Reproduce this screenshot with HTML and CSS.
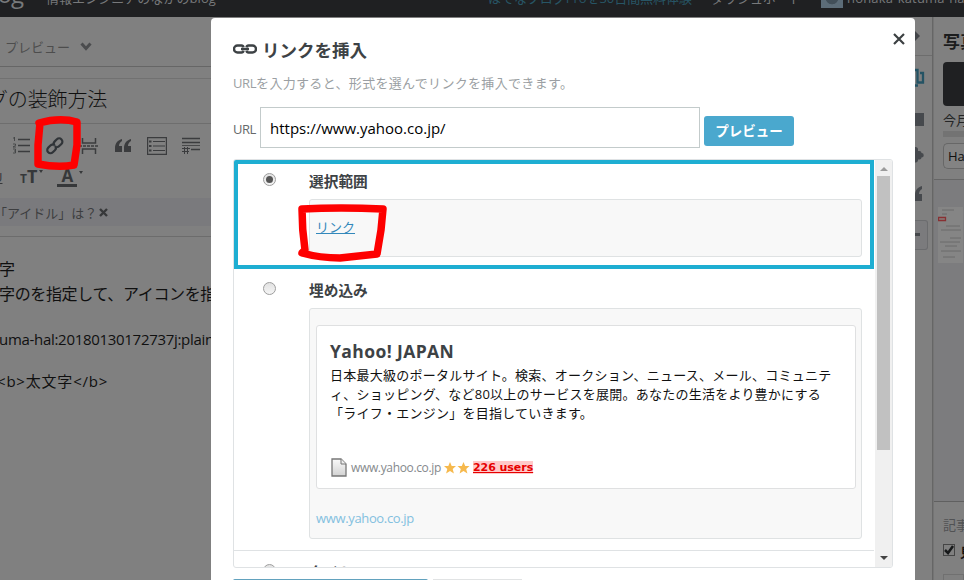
FILE: index.html
```html
<!DOCTYPE html>
<html lang="ja">
<head>
    <meta charset="UTF-8">
    <title>リンクを挿入</title>
    <link rel="stylesheet" href="styles.css">
</head>
<body>

<header class="topbar">
    <span class="logo">Blog</span>
    <span class="blog-name">情報エンジニアのながのblog</span>
    <span class="pro">はてなブログProを30日間無料体験</span>
    <span class="dash">ダッシュボード</span>
    <span class="avatar"></span>
    <span class="user">honaka-katuma-hal</span>
</header>

<div class="app">
    <main class="editor">
        <div class="tabs">プレビュー
            <svg width="12" height="9" viewBox="0 0 12 9"><path d="M1.500 1.500 6 6.500 10.500 1.500" fill="none" stroke="#4b4c4e" stroke-width="3"/></svg>
        </div>
        <div class="entry-title">グの装飾方法</div>
        <div class="toolbar">
            <div class="tools">
                <svg width="18" height="18" viewBox="0 0 18 18"><path d="M5 2.500h12M5 8.500h12M5 14.500h12" stroke="#3b3c3e" stroke-width="1.300"/><path d="M1.500 0v4M0 1h1.500M0 7h2.500v1.500L0 10h3M0 12h2.500v4H0M1 14h1.500" fill="none" stroke="#3b3c3e" stroke-width=".8"/></svg>
                <svg width="18" height="18" viewBox="0 0 18 18"><g fill="none" stroke="#303438" stroke-width="2.200" transform="rotate(-44 9 9)"><path d="M8.500 6.800A3 3 0 0 0 6 5.500H3a3.200 3.200 0 0 0 0 6.500h3a3 3 0 0 0 3-3M9.500 10.800A3 3 0 0 0 12 12h3a3.200 3.200 0 0 0 0-6.500h-3a3 3 0 0 0-3 3"/></g></svg>
                <svg width="20" height="18" viewBox="0 0 20 18"><path d="M3.500 1v5h13V1M3.500 17v-5h13v5" fill="none" stroke="#3b3c3e" stroke-width="1.500"/><path d="M0 9h20" stroke="#3b3c3e" stroke-width="1.500" stroke-dasharray="3 1"/></svg>
                <svg width="17" height="16" viewBox="0 0 17 16"><path d="M7 1C3 2 0 5 0 10v4h7V8H4c0-2 1-4 3-5zM16 1c-4 1-7 4-7 9v4h7V8h-3c0-2 1-4 3-5z" fill="#3b3c3e"/></svg>
                <svg width="20" height="18" viewBox="0 0 20 18"><path d="M.6.600h18.800v16.800H.6zM6 4.500h12M6 9h12M6 13.500h12" fill="none" stroke="#3b3c3e" stroke-width="1.200"/><path d="M2 4.500h2.500M2 9h2.500M2 13.500h2.500" stroke="#3b3c3e" stroke-width="2"/></svg>
                <svg width="18" height="18" viewBox="0 0 18 18"><path d="M0 1.500h18M0 5.500h18M9 12.500h9" stroke="#3b3c3e" stroke-width="1.500"/><path d="M0 8.500h18" stroke="#3b3c3e" stroke-width=".8"/><path d="M0 11.500h8M0 14.500h7M2.500 10v7M5.500 10v7" stroke="#3b3c3e" stroke-width="1"/></svg>
            </div>
            <div class="tools second">
                <span class="under">U</span>
                <span class="size"><small>T</small>T<i></i></span>
                <span class="color"><b>A</b><i></i></span>
            </div>
        </div>
        <div class="topic">「アイドル」は？
            <svg width="9" height="9" viewBox="0 0 9 9"><path d="M1 1l7 7M8 1 1 8" stroke="#37383a" stroke-width="2.400"/></svg>
        </div>
        <div class="body-text">
            <p>字</p>
            <p>字のを指定して、アイコンを指定</p>
            <p class="id">uma-hal:20180130172737j:plain</p>
            <p class="tag">&lt;b&gt;太文字&lt;/b&gt;</p>
        </div>
    </main>

    <nav class="rail">
        <div class="rail-top"><svg width="5" height="10" viewBox="0 0 5 10"><path d="M0 0l5 5-5 5z" fill="#424549"/></svg></div>
        <svg width="10" height="20" viewBox="0 0 10 20"><path d="M0 2h2.500v12.500H8V5H5M0 17.500h3" fill="none" stroke="#245364" stroke-width="2.300"/></svg>
        <svg width="9" height="13" viewBox="0 0 9 13"><path d="M0 0h9v13H0z" fill="#46494d"/></svg>
        <svg width="9" height="18" viewBox="0 0 9 18"><path d="M0 1a2.500 2.500 0 0 1 3 3v1h1.500a2 2 0 0 1 2 2 2.200 2.200 0 1 1 0 4.500 2 2 0 0 1-2 2H3v1a2.500 2.500 0 0 1-3 2z" fill="#46494d"/></svg>
        <svg width="8" height="16" viewBox="0 0 8 16"><path d="M7 0C3 1 0 4 0 9v6h7V8H4c0-2 1-4 3-5z" fill="#46494d"/></svg>
        <div class="rail-more"></div>
    </nav>

    <aside class="side">
        <h2>写真を投稿</h2>
        <div class="upload"></div>
        <div class="month">今月の利用量</div>
        <div class="meter"></div>
        <div class="album">Hatena</div>
        <div class="photos">
            <svg width="25" height="56" viewBox="0 0 25 56"><path d="M0 0h25v56H0z" fill="#858585"/><path d="M4 3h12M4 7h5M8 19h14M3 23h20M12 31h11M2 35h20M7 39h12M3 44h20M5 50h12" stroke="#6a6a6a"/><path d="M.5 10.500h7v3h-7z" fill="#89807f" stroke="#883033" stroke-width="1.300"/></svg>
        </div>
        <div class="settings">
            <h3>記事</h3>
            <div class="check"><span><svg width="12" height="12" viewBox="0 0 12 12"><path d="M2 6l3 3 5-7" fill="none" stroke="#17191a" stroke-width="2.500"/></svg></span>見出し</div>
            <div class="field"></div>
        </div>
    </aside>
</div>

<section class="modal">
    <svg class="close" width="12" height="12" viewBox="0 0 12 12"><path d="M1 1l10 10M11 1 1 11" stroke="#3c4042" stroke-width="2.200"/></svg>
    <h1>
        <svg width="24" height="10" viewBox="0 0 24 10"><path d="M10.500 3.200Q10.200 1.500 8.500 1.500H4.500a3.500 3.500 0 0 0 0 7h4Q10.200 8.500 10.500 6.800M13.500 3.200Q13.800 1.500 15.500 1.500h4a3.500 3.500 0 0 1 0 7h-4Q13.800 8.500 13.500 6.800M8 5h8" fill="none" stroke="#3d4245" stroke-width="2.400"/></svg>
        <span>リンクを挿入</span>
    </h1>
    <p class="lead"><span>URL</span>を入力すると、形式を選んでリンクを挿入できます。</p>

    <div class="url-row">
        <label>URL</label>
        <div class="url-input">https://www.yahoo.co.jp/</div>
        <div class="btn">プレビュー</div>
    </div>

    <div class="list">
        <div class="items">
            <div class="item selected">
                <span class="radio on"></span>
                <div class="content">
                    <h4>選択範囲</h4>
                    <div class="preview"><a>リンク</a></div>
                </div>
            </div>
            <div class="item embed">
                <span class="radio"></span>
                <div class="content">
                    <h4>埋め込み</h4>
                    <div class="preview">
                        <div class="card">
                            <h5>Yahoo! JAPAN</h5>
                            <p>日本最大級のポータルサイト。検索、オークション、ニュース、メール、コミュニテ<br>ィ、ショッピング、など80以上のサービスを展開。あなたの生活をより豊かにする<br>「ライフ・エンジン」を目指していきます。</p>
                            <div class="meta">
                                <svg width="16" height="19" viewBox="0 0 16 19"><defs><linearGradient id="paper" x2="0" y2="1"><stop stop-color="#fafafa"/><stop offset="1" stop-color="#d2d2d2"/></linearGradient></defs><path d="M1 1h9l5 5v12H1z" fill="url(#paper)" stroke="#777" stroke-width="1.300"/><path d="M10 1v5h5" fill="#eee" stroke="#777"/></svg>
                                <span class="host">www.yahoo.co.jp</span>
                                <svg class="stars" width="26" height="12" viewBox="0 0 26 12"><g fill="#f6b94d"><path id="star" d="M6 0l1.700 4H12L8.700 6.900 9.900 11.500 6 8.900l-3.900 2.600 1.200-4.600L0 4h4.300z"/><use href="#star" x="13.500"/></g></svg>
                                <span class="users">226 users</span>
                            </div>
                        </div>
                        <span class="cite">www.yahoo.co.jp</span>
                    </div>
                </div>
            </div>
            <div class="item last">
                <span class="radio"></span>
                <div class="content"><h4>タイトル</h4></div>
            </div>
        </div>
        <div class="scrollbar">
            <i class="up"></i>
            <div class="thumb"></div>
            <i class="down"></i>
        </div>
    </div>
    <div class="footer"><div class="ok"></div><div class="cancel"></div></div>
</section>

<!-- hand-drawn markers -->
<svg class="marks" width="964" height="580" viewBox="0 0 964 580">
    <path d="M39 123Q60 117 77 122L77 145 74 165Q58 168 38 164L38 145 40 123" />
    <path d="M302 209Q340 207 383 209L381 230 377 254 340 258Q320 258 302 253L305 250Q302 230 302 209" />
</svg>

</body>
</html>
```
FILE: styles.css
```css
* { box-sizing: border-box; }
body { margin: 0; position: relative; width: 964px; height: 580px; overflow: hidden; background: #808080; font-family: "Open Sans", "Noto Sans CJK JP", sans-serif; font-size: 13px; color: #101010; }
h1, h2, h3, h4, h5, p { margin: 0; }
svg { display: block; flex: none; }

.topbar { display: flex; height: 17px; background: #1f2022; color: #77797b; white-space: nowrap; overflow: hidden; line-height: 20px; }
.topbar span { flex: none; margin-top: -12px; }
.topbar .logo { width: 68px; margin-left: -22px; font-size: 24px; margin-top: -16px; letter-spacing: -1px; }
.topbar .blog-name { width: 442px; font-size: 13px; letter-spacing: .05px; }
.topbar .pro { width: 223px; color: #275565; letter-spacing: -.05px; }
.topbar .dash { width: 110px; }
.topbar .avatar { width: 22px; height: 20px; margin-right: 4px; background: radial-gradient(circle at 50% 50%, #424f59 40%, #5c6c78 45%); }
.topbar .user { letter-spacing: .2px; }

.app { display: grid; grid-template-columns: 911px 22px 31px; height: 563px; }
.editor { overflow: hidden; white-space: nowrap; }
.tabs { display: flex; align-items: center; gap: 10px; height: 50px; padding: 9px 0 0 5px; border-bottom: 1px solid #666; color: #4d4d4d; }
.entry-title { height: 46px; margin-top: 11px; padding-left: 0; text-indent: -12px; border-top: 1px solid #717171; border-bottom: 1px solid #6e6e6e; font-size: 20px; font-weight: 300; letter-spacing: -.15px; line-height: 42px; }
.toolbar { height: 74px; padding-top: 12px; }
.tools { display: flex; align-items: center; gap: 15px; height: 20px; padding-left: 13px; }
.tools svg:nth-child(n+4) { margin-left: 1px; margin-right: -1px; }
.tools.second { gap: 14px; height: 22px; margin-top: 10px; padding-left: 0; color: #36383a; }
.under { width: 6px; text-indent: -7px; overflow: hidden; text-decoration: underline; }
.size { display: flex; align-items: baseline; font-size: 18px; font-weight: bold; line-height: 20px; }
.size small { font-size: 12px; }
.color { display: flex; }
.color b { width: 20px; height: 20px; border-bottom: 3px solid #36383a; text-align: center; font-size: 17px; line-height: 18px; }
.second i { align-self: flex-start; margin: 4px 0 0 2px; border: 2px solid transparent; border-top: 3px solid #36383a; border-bottom: 0; }
.topic { display: flex; align-items: center; gap: 2px; height: 28px; background: #7a7a7d; color: #3d3e40; text-indent: -6px; }
.body-text { margin-top: 10px; padding-top: 20px; border-top: 1px solid #6c6c6c; font-size: 16px; line-height: 25px; letter-spacing: -.35px; text-indent: -1px; }
.body-text .id { margin-top: 20px; font-size: 15px; letter-spacing: -.3px; }
.body-text .tag { margin-top: 17px; text-indent: -3px; font-size: 15px; letter-spacing: .8px; }

.rail { display: flex; flex-direction: column; padding-left: 4px; border-right: 1px solid #666; }
.rail-top { height: 39px; margin-bottom: 12px; padding-top: 14px; border-bottom: 1px solid #6d6d6d; }
.rail > svg:nth-of-type(1) { margin-bottom: 25px; }
.rail > svg:nth-of-type(2) { margin-bottom: 20px; }
.rail > svg:nth-of-type(3) { margin-bottom: 22px; }
.rail > svg:nth-of-type(4) { margin-bottom: 18px; }
.rail-more { width: 13px; height: 30px; border: 1px solid #6b6c6e; border-left: 0; border-radius: 0 3px 3px 0; background: #7b7b7d; }
.rail-more::before { content: ""; display: block; width: 5px; height: 3px; margin-top: 12px; background: #45484b; }

.side { border-left: 1px solid #747474; overflow: hidden; white-space: nowrap; }
.side h2 { padding-left: 9px; margin-top: 13px; font-size: 17px; line-height: 24px; color: #1b1c1d; }
.upload { height: 44px; margin: 8px 0 0 9px; border-radius: 4px 0 0 4px; background: #1f2022; }
.month { padding-left: 9px; margin-top: 4px; line-height: 20px; color: #242526; }
.meter { height: 6px; margin: 1px 0 0 9px; background: #737373; }
.album { height: 26px; margin: 6px 0 0 9px; padding-left: 4px; border: 1px solid #676767; border-right: 0; border-radius: 5px 0 0 5px; background: #838383; line-height: 25px; }
.photos { height: 323px; margin-top: 10px; padding: 27px 0 0 4px; border-top: 1px solid #666; border-bottom: 1px solid #606060; background: #7c7c7e; }
.settings { padding-left: 9px; }
.settings h3 { padding-top: 12px; font-size: 13px; font-weight: normal; line-height: 22px; color: #515254; }
.check { display: flex; align-items: center; gap: 5px; height: 24px; margin-top: 3px; font-weight: bold; }
.check span { width: 12px; height: 12px; margin-top: -2px; outline: 1px solid #454545; outline-offset: -1px; }
.field { height: 20px; margin-top: 11px; border: 1px solid #707070; }

.modal { position: absolute; left: 211px; top: 18px; width: 704px; height: 570px; padding: 19px 22px 0; border-radius: 4px 4px 0 0; background: #fff; color: #3d4245; }
.close { position: absolute; right: 10px; top: 15px; }
.modal h1 { display: flex; align-items: center; gap: 5px; height: 24px; font-size: 17.500px; line-height: 24px; font-weight: bold; }
.modal h1 span { margin-top: 2px; }
.lead { margin-top: 12px; line-height: 20px; color: #9b9fa3; letter-spacing: .32px; }
.lead span { letter-spacing: -.4px; }
.url-row { display: flex; align-items: center; height: 41px; margin-top: 14px; }
.url-row label { width: 27px; margin-top: 2px; color: #66696b; letter-spacing: -.5px; }
.url-input { width: 440px; height: 41px; padding-left: 9px; border: 1px solid #c3cbcb; color: #000; font-size: 15px; line-height: 40px; letter-spacing: 0; }
.btn { width: 90px; height: 30px; margin: 7px 0 0 4px; border-radius: 3px; background: #4aa8ce; color: #fff; text-align: center; font-size: 13.500px; font-weight: bold; line-height: 30px; }

.list { display: flex; width: 660px; height: 409px; margin-top: 11px; border: 1px solid #dfe2e4; border-radius: 3px; overflow: hidden; }
.items { width: 640px; margin-right: 1px; overflow: hidden; }
.item { display: flex; padding: 0 12px 0 29px; }
.item h4 { height: 22px; font-size: 14.700px; line-height: 22px; }
.radio { flex: none; width: 13px; height: 13px; border: 1px solid #9d9d9d; border-radius: 50%; background: linear-gradient(#e2e2e2, #f5f5f5); }
.radio.on { display: grid; place-items: center; }
.radio.on::before { content: ""; width: 7px; height: 7px; border-radius: 50%; background: #555; }
.content { width: 553px; margin-left: 33px; }
.preview { border: 1px solid #dfe2e3; border-radius: 3px; background: #f8f8f8; }
.item.selected { height: 109px; padding: 6px 7px 0 25px; border: 4px solid #1eaed2; }
.selected .radio { margin-top: 3px; }
.selected .preview { height: 58px; margin-top: 7px; padding: 17px 6px 0; line-height: 20px; }
.selected a { color: #3388bb; text-decoration: underline; }
.embed { height: 281px; padding-top: 10px; }
.embed .radio { margin-top: 3px; }
.embed .preview { height: 231px; margin-top: 7px; padding: 16px 5px 0 6px; }
.card { height: 164px; padding: 13px 13px 0; border: 1px solid #dfe0e1; border-radius: 3px; background: #fff; color: #111; }
.card h5 { color: #3d4245; font-size: 17.500px; line-height: 24px; letter-spacing: .4px; }
.card p { line-height: 19px; margin-top: 3px; font-size: 13px; letter-spacing: .24px; white-space: nowrap; }
.meta { display: flex; align-items: center; height: 20px; margin-top: 34px; padding-left: 1px; }
.host { width: 92px; margin-left: 4px; font-size: 12px; letter-spacing: -.35px; color: #85898c; }
.stars { margin: 1px -1px 0 1px; }
.users { margin-left: 4px; background: #ffc9c9; color: #e60000; text-decoration: underline; font: bold 11px/13px "DejaVu Sans", sans-serif; letter-spacing: -.05px; }
.cite { display: block; margin-top: 19px; line-height: 20px; color: #83c0df; letter-spacing: -.35px; }
.item.last { height: 40px; padding-top: 10px; border-top: 1px solid #dfe2e4; }
.last .radio { margin-top: 3px; }
.scrollbar { display: flex; flex-direction: column; align-items: center; width: 17px; padding: 7px 1px 7px 1px; background: #f0f0f0; }
.up, .down { border: 4px solid transparent; }
.up { border-top: 0; border-bottom-color: #9b9b9b; }
.thumb { width: 13px; height: 274px; margin-top: 5px; background: #c1c1c1; }
.down { margin-top: auto; border-bottom: 0; border-top-color: #444; }
.footer { display: flex; gap: 5px; height: 10px; margin-top: 11px; }
.ok { width: 195px; border-radius: 2px; background: #62a2be; }
.cancel { width: 89px; background: #e1e3e4; }

.marks { position: absolute; left: 0; top: 0; fill: none; stroke: #fe0000; stroke-width: 7.500px; stroke-linecap: round; stroke-linejoin: round; pointer-events: none; }
```
